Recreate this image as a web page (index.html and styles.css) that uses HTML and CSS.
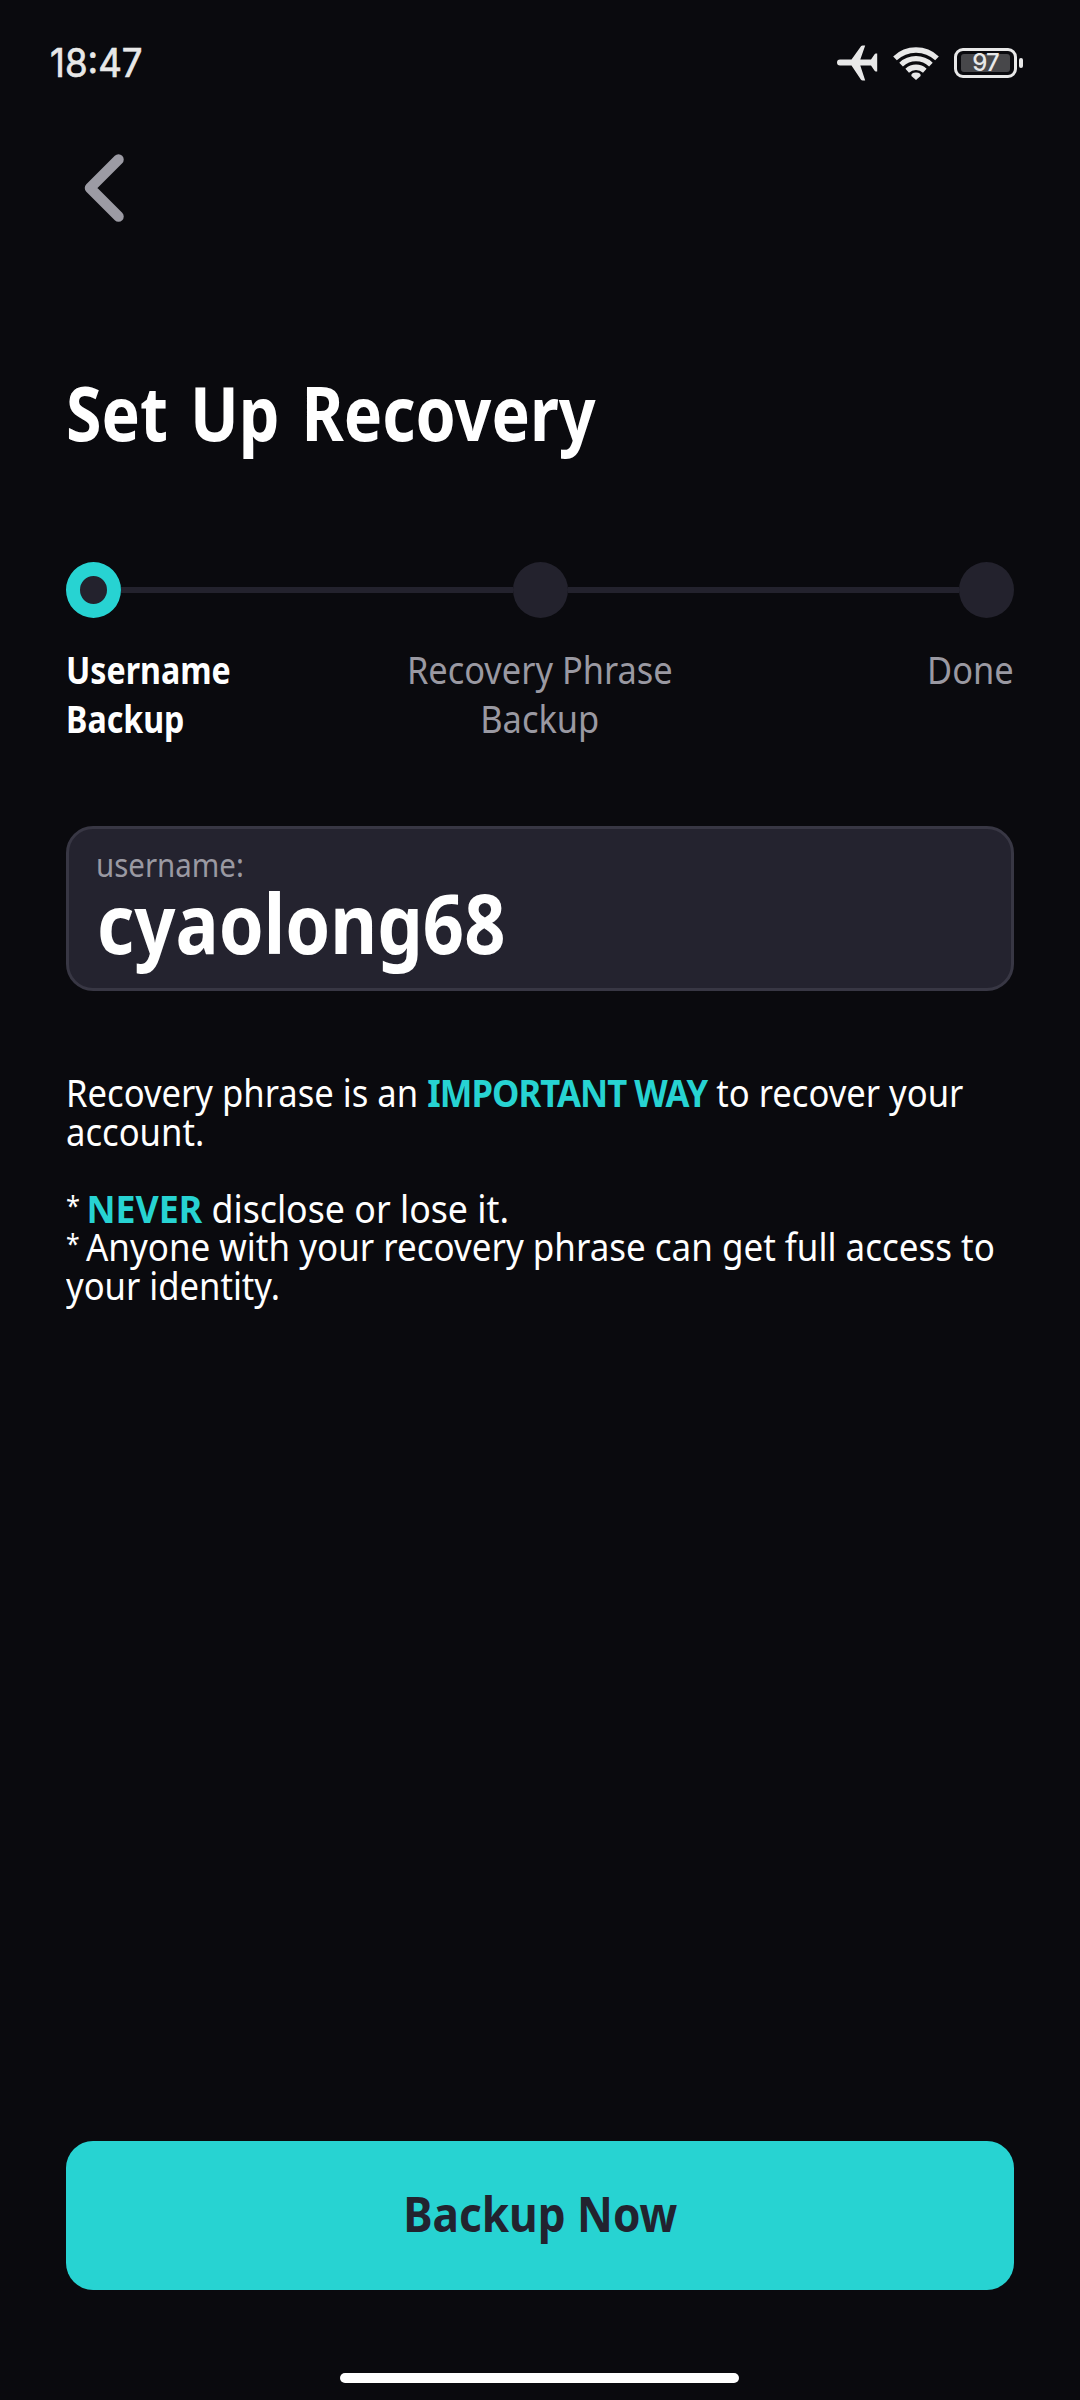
FILE: index.html
```
<!DOCTYPE html>
<html lang="en">
<head>
<meta charset="utf-8">
<title>Set Up Recovery</title>
<link rel="stylesheet" href="styles.css">
</head>
<body>
<main class="screen">
  <header class="status">
    <span class="time">18:47</span>
    <div class="indicators">
      <svg class="plane" viewBox="0 0 41 36" width="41" height="36">
        <path d="M3 14.5H14.5L24 1.2Q24.6 .4 25.6.4H28.2L23.3 14.5H34L37.6 9.2Q38 8.6 38.8 8.6H40.2V26.4H38.8Q38 26.4 37.6 25.8L34 20.5H23.3L28.2 35.6H25.6Q24.6 35.6 24 34.8L14.5 20.5H3A3 3 0 0 1 3 14.5Z"/>
      </svg>
      <svg class="wifi" viewBox="0 0 46 34" width="46" height="34">
        <path class="arc" d="M2 12.4A30.5 30.5 0 0 1 44 12.4M8.1 18.6A21.8 21.8 0 0 1 37.9 18.6M14.2 24.7A13 13 0 0 1 31.8 24.7"/>
        <path d="M23 34L18.4 30Q17.8 26.4 23 26.4T27.6 30Z"/>
      </svg>
      <div class="battery"><span class="level">97</span></div>
      <i class="nub"></i>
    </div>
  </header>

  <nav class="nav">
    <svg class="back" viewBox="0 0 40 68" width="40" height="68"><path d="M34.5 5.5L6 34L34.5 62.5"/></svg>
  </nav>

  <h1 class="title"><span>Set Up Recovery</span></h1>

  <div class="track">
    <i class="dot active"></i><i class="bar"></i><i class="dot"></i><i class="bar"></i><i class="dot"></i>
  </div>
  <div class="labels">
    <div class="label current"><span>Username</span><span>Backup</span></div>
    <div class="label middle"><span>Recovery Phrase</span><span>Backup</span></div>
    <div class="label last"><span>Done</span></div>
  </div>

  <section class="card">
    <span class="caption">username:</span>
    <strong class="name">cyaolong68</strong>
  </section>

  <section class="copy">
    <p class="intro">Recovery phrase is an <b>IMPORTANT WAY</b> to recover your</p>
    <p class="intro">account.</p>
    <p>&nbsp;</p>
    <p class="never"><i class="star">*</i> <b>NEVER</b> disclose or lose it.</p>
    <p><i class="star">*</i> Anyone with your recovery phrase can get full access to</p>
    <p class="intro">your identity.</p>
  </section>

  <button class="primary"><span>Backup Now</span></button>
  <div class="home"></div>
</main>
</body>
</html>
```
FILE: styles.css
```
* { box-sizing: border-box; margin: 0; padding: 0; }
body { background: #0a0a0e; }

.screen {
  display: flex;
  flex-direction: column;
  width: 1080px;
  height: 2400px;
  padding: 0 66px 17px;
  overflow: hidden;
  background: #0a0a0e;
  color: #fff;
  font-family: "Noto Sans", sans-serif;
}

/* status bar */
.status {
  display: flex;
  justify-content: space-between;
  height: 126px;
  margin: 0 -9px 0 -16px;
  color: #e8e8e8;
}
.time {
  padding-top: 39px;
  font: 400 39px/48px Inter, sans-serif;
  -webkit-text-stroke: .7px currentColor;
  transform: scaleX(.94);
  transform-origin: left;
}
.indicators { display: flex; align-items: flex-start; }
.plane { margin: 45px 15px 0 0; fill: #e8e8e8; }
.wifi { margin: 46px 15px 0 0; fill: #e8e8e8; }
.arc { fill: none; stroke: #e8e8e8; stroke-width: 5.3; }
.battery {
  width: 63px;
  height: 30px;
  margin-top: 48px;
  padding: 3px 4px;
  border: 3px solid #e8e8e8;
  border-radius: 9px;
}
.level {
  display: block;
  height: 18px;
  border-radius: 3px;
  background: #47474a;
  font: 500 24px/18px Inter, sans-serif;
  letter-spacing: -1px;
  text-align: center;
}
.nub { width: 4px; height: 10px; margin: 58px 0 0 2px; border-radius: 2px; background: #e8e8e8; }

.nav { height: 236px; padding: 28px 0 0 18px; }
.back { display: block; fill: none; stroke: #9c9ba4; stroke-width: 10.5; stroke-linecap: round; stroke-linejoin: round; }

.title { height: 200px; font-size: 76px; line-height: 100px; font-weight: 700; word-spacing: 6px; }
.title span { display: block; width: max-content; transform: scaleX(.849); transform-origin: left; }

/* stepper */
.track { display: flex; align-items: center; height: 56px; }
.dot { width: 55px; height: 56px; border-radius: 50%; background: #23222d; }
.dot.active { border: 14px solid #27d3d2; }
.bar { flex: 1; height: 6px; background: #23222d; }

.labels { display: grid; grid-template-columns: 1fr 1fr 1fr; height: 207px; padding-top: 27px; font-size: 38px; line-height: 49px; color: #9a99a2; }
.label { display: flex; flex-direction: column; align-items: flex-start; }
.label span { white-space: nowrap; transform: scaleX(.905); }
.current { color: #fff; font-weight: 700; }
.current span { transform: scaleX(.846); transform-origin: left; }
.middle { align-items: center; }
.last { align-items: flex-end; }
.last span { transform-origin: right; }

.card {
  display: flex;
  flex-direction: column;
  align-items: flex-start;
  height: 165px;
  margin-top: 1px;
  padding: 17px 25px;
  border: 3px solid #383744;
  border-radius: 27px;
  background: #24232f;
}
.caption { margin-left: 2px; font-size: 32px; line-height: 38px; color: #9a99a2; transform: scaleX(.92); transform-origin: left; }
.name { margin-left: 3px; font-size: 82px; line-height: 77px; transform: scaleX(.88); transform-origin: left; }

.copy { margin-top: 82px; font-size: 38px; line-height: 38.5px; }
.copy p { width: max-content; transform: scaleX(.92); transform-origin: left; }
.copy b { color: #27d3d2; letter-spacing: -1px; }
.copy .intro { transform: scaleX(.911); }
.copy .never { transform: scaleX(.94); }
.never b { letter-spacing: 0; }
.star { font-size: 27px; line-height: 0; font-style: normal; vertical-align: 7px; letter-spacing: -3px; }

.primary {
  height: 149px;
  margin-top: auto;
  padding-bottom: 5px;
  border: 0;
  border-radius: 27px;
  background: #27d3d2;
  color: #22232f;
  font: 700 49px "Noto Sans", sans-serif;
}
.primary span { display: inline-block; transform: scaleX(.9); }
.home { width: 399px; height: 10px; margin: 83px 0 0 274px; border-radius: 5px; background: #fff; }
```
